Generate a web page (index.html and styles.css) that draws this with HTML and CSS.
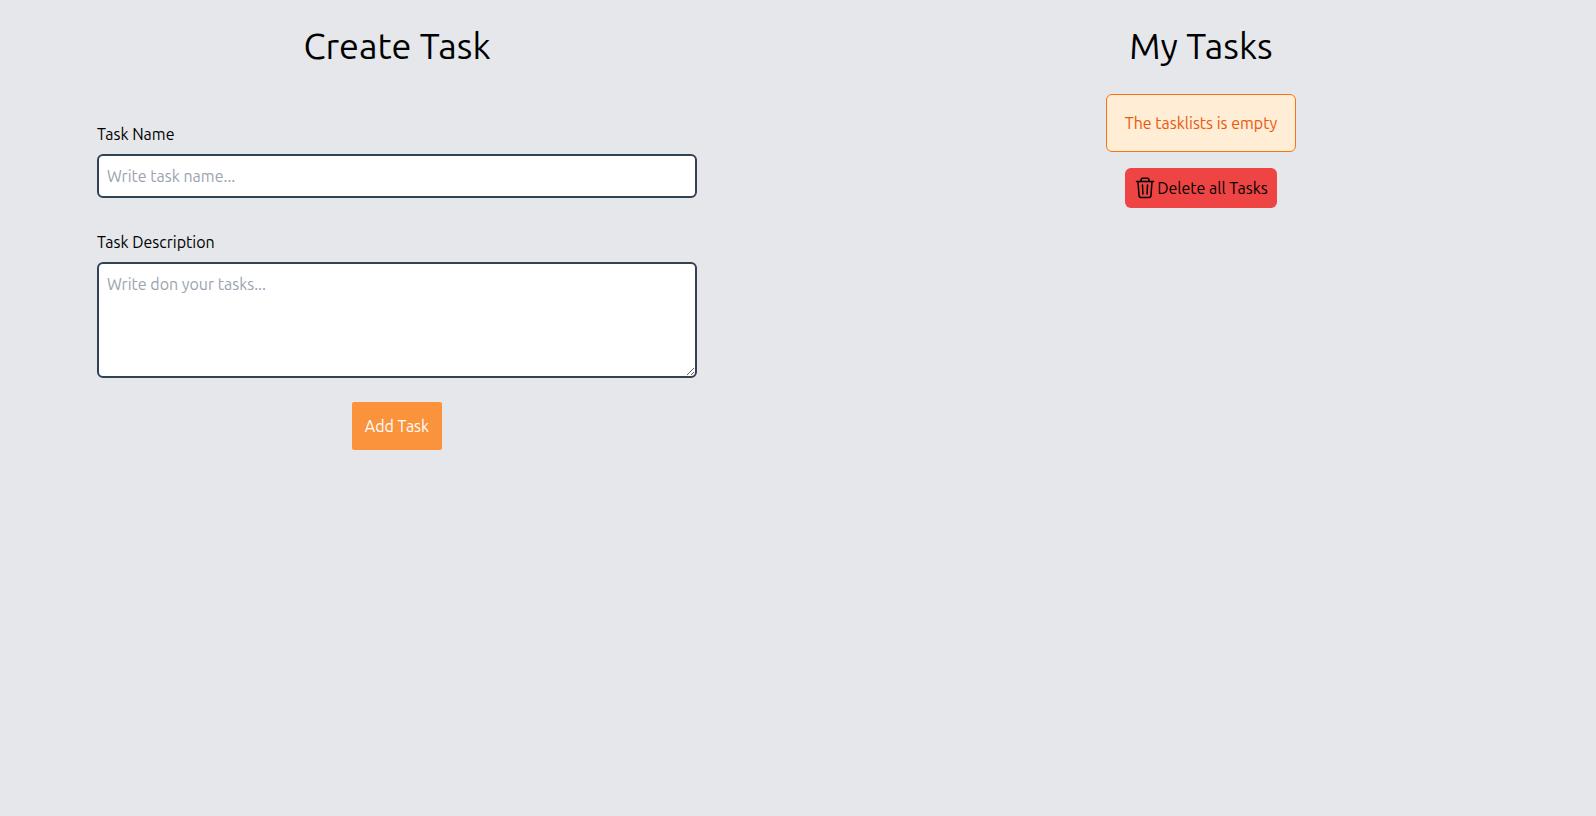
FILE: index.html
```html
<!DOCTYPE html>
<html lang="en">
<head>
<meta charset="utf-8">
<meta name="viewport" content="width=device-width, initial-scale=1">
<title>Tasks</title>
<link rel="stylesheet" href="styles.css">
</head>
<body>
<main class="layout">
  <section class="column create">
    <h1 class="title">Create Task</h1>
    <form class="task-form">
      <div class="field">
        <label for="task-name">Task Name</label>
        <input class="control" id="task-name" type="text" placeholder="Write task name...">
      </div>
      <div class="field">
        <label for="task-description">Task Description</label>
        <textarea class="control" id="task-description" rows="4" placeholder="Write don your tasks..."></textarea>
      </div>
      <button class="add" type="submit">Add Task</button>
    </form>
  </section>
  <section class="column tasks">
    <h1 class="title">My Tasks</h1>
    <p class="notice">The tasklists is empty</p>
    <button class="delete" type="button">
      <svg class="icon" viewBox="0 0 24 24" fill="none" stroke="currentColor" stroke-width="1.5" stroke-linecap="round" stroke-linejoin="round" aria-hidden="true">
        <path d="M3.5 5.5h17M5 5.5l1 14c.1 1.4.9 2 2.2 2h7.6c1.3 0 2.1-.6 2.2-2l1-14M8 5.5V4c0-1.1.6-1.700 1.700-1.700h4.600C15.400 2.300 16 2.900 16 4v1.500M9.500 9l.4 9M14.500 9l-.4 9"/>
      </svg>
      <span>Delete all Tasks</span>
    </button>
  </section>
</main>
</body>
</html>
```
FILE: styles.css
```css
* {
  box-sizing: border-box;
}

body {
  margin: 0;
  min-height: 100vh;
  background: #e5e7eb;
  color: #000;
  font: 16px/24px Ubuntu, "Noto Sans", sans-serif;
}

.layout {
  display: grid;
  grid-template-columns: 1fr 1fr;
}

.column {
  display: flex;
  flex-direction: column;
  align-items: center;
  padding-top: 26px;
}

.create {
  padding-right: 4px;
}

.tasks {
  padding-left: 8px;
}

.title {
  margin: 0;
  font-size: 36px;
  font-weight: 400;
  line-height: 40px;
}

.task-form {
  display: flex;
  flex-direction: column;
  align-items: center;
  width: 100%;
  max-width: 600px;
  margin-top: 56px;
}

.field {
  display: flex;
  flex-direction: column;
  gap: 8px;
  width: 100%;
}

.field + .field {
  margin-top: 32px;
}

.control {
  display: block;
  width: 100%;
  margin: 0;
  padding: 8px;
  border: 2px solid #334155;
  border-radius: 6px;
  background: #fff;
  color: inherit;
  font: inherit;
}

.control::placeholder {
  color: #9ca3af;
}

.add {
  margin-top: 24px;
  padding: 12px 13px;
  border: 0;
  border-radius: 2px;
  background: #fb923c;
  color: #fff;
  font: inherit;
}

.notice {
  margin: 28px 0 16px;
  padding: 16px 18px;
  border: 1px solid #f97316;
  border-radius: 6px;
  background: #ffedd5;
  color: #ea580c;
}

.delete {
  display: flex;
  align-items: center;
  padding: 8px 9px 8px 8px;
  border: 0;
  border-radius: 6px;
  background: #ef4444;
  color: #000;
  font: inherit;
}

.icon {
  width: 24px;
  height: 24px;
}
```
